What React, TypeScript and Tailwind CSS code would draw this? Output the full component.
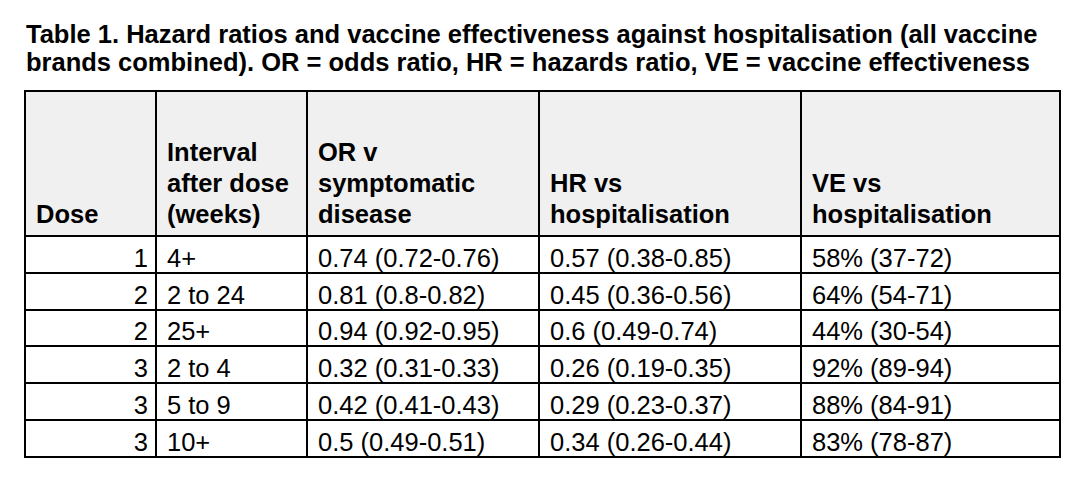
import React from 'react';

type Row = {
  dose: number;
  interval: string;
  or: string;
  hr: string;
  ve: string;
};

const rows: Row[] = [
  { dose: 1, interval: '4+', or: '0.74 (0.72-0.76)', hr: '0.57 (0.38-0.85)', ve: '58% (37-72)' },
  { dose: 2, interval: '2 to 24', or: '0.81 (0.8-0.82)', hr: '0.45 (0.36-0.56)', ve: '64% (54-71)' },
  { dose: 2, interval: '25+', or: '0.94 (0.92-0.95)', hr: '0.6 (0.49-0.74)', ve: '44% (30-54)' },
  { dose: 3, interval: '2 to 4', or: '0.32 (0.31-0.33)', hr: '0.26 (0.19-0.35)', ve: '92% (89-94)' },
  { dose: 3, interval: '5 to 9', or: '0.42 (0.41-0.43)', hr: '0.29 (0.23-0.37)', ve: '88% (84-91)' },
  { dose: 3, interval: '10+', or: '0.5 (0.49-0.51)', hr: '0.34 (0.26-0.44)', ve: '83% (78-87)' },
];

const th = 'border-2 border-black bg-[#f0f0f0] align-bottom text-left font-bold px-[10px] pb-[5px] leading-[31px]';
const td = 'border-2 border-black h-[36.8px] px-[10px] pt-[5px] pb-0 align-bottom leading-[27px]';

const App: React.FC = () => {
  return (
    <div
      className="w-[1090px] h-[484px] bg-white text-black"
      style={{ fontFamily: '"Liberation Sans", Arial, sans-serif' }}
    >
      <div className="pt-[20px] pl-[26px]">
        <p className="text-[25.5px] font-bold leading-[28px] whitespace-nowrap">
          Table 1. Hazard ratios and vaccine effectiveness against hospitalisation (all vaccine
          <br />
          brands combined). OR = odds ratio, HR = hazards ratio, VE = vaccine effectiveness
        </p>
      </div>

      <div className="pl-[24px] pt-[14px]">
        <table className="table-fixed border-collapse text-[25.5px] text-black">
          <colgroup>
            <col className="w-[131px]" />
            <col className="w-[151px]" />
            <col className="w-[232px]" />
            <col className="w-[262px]" />
            <col className="w-[259px]" />
          </colgroup>
          <thead>
            <tr className="h-[145px]">
              <th className={th}>Dose</th>
              <th className={th}>
                Interval
                <br />
                after dose
                <br />
                (weeks)
              </th>
              <th className={th}>
                OR v
                <br />
                symptomatic
                <br />
                disease
              </th>
              <th className={th}>
                HR vs
                <br />
                hospitalisation
              </th>
              <th className={th}>
                VE vs
                <br />
                hospitalisation
              </th>
            </tr>
          </thead>
          <tbody>
            {rows.map((r, i) => (
              <tr key={i}>
                <td className={`${td} text-right pr-[7px]`}>{r.dose}</td>
                <td className={td}>{r.interval}</td>
                <td className={td}>{r.or}</td>
                <td className={td}>{r.hr}</td>
                <td className={td}>{r.ve}</td>
              </tr>
            ))}
          </tbody>
        </table>
      </div>
    </div>
  );
};

export default App;
